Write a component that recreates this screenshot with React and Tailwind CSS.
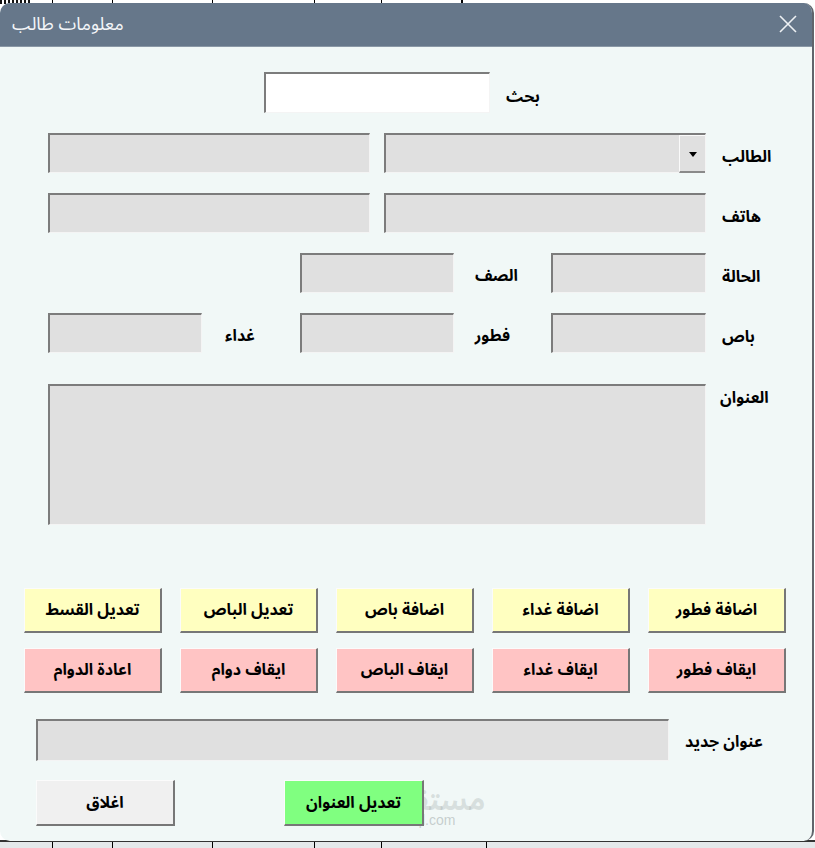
import React from "react";

const F = { fontFamily: '"Noto Sans Arabic", "DejaVu Sans", "Noto Sans", sans-serif' };

function Box({ w, h = "h-[40px]", white = false, children }) {
  return (
    <div
      className={`${w} ${h} ${white ? "bg-white" : "bg-[#e0e0e0]"} border-t-2 border-l-2 border-[#7c7c7c] border-r border-b border-r-[#f4f4f4] border-b-[#f4f4f4] shrink-0 relative`}
    >
      {children}
    </div>
  );
}

function Label({ children, className = "" }) {
  return (
    <div dir="rtl" className={`text-[16px] font-bold text-black leading-none whitespace-nowrap ${className}`}>
      {children}
    </div>
  );
}

function Btn({ children, color, w = "w-[138px]", h = "h-[45px]" }) {
  return (
    <div
      dir="rtl"
      className={`${w} ${h} ${color} shrink-0 relative z-10 flex items-center justify-center border-t border-l border-[#fbfbfb] border-r-2 border-b-2 border-r-[#777] border-b-[#777] text-[16px] font-bold text-black`}
    >
      {children}
    </div>
  );
}

export default function App() {
  return (
    <div style={F} className="w-[815px] h-[848px] bg-white relative overflow-hidden">
      {/* spreadsheet strips behind */}
      <div className="absolute top-0 left-0 w-full h-[4px] flex bg-white">
        <div className="w-[30px] h-full bg-[repeating-linear-gradient(90deg,#111_0,#111_2px,#fff_2px,#fff_4px)]" />
        <div className="w-[23px] border-r border-black" />
        <div className="w-[60px] border-r border-black" />
        <div className="w-[100px] border-r border-black" />
        <div className="w-[102px] border-r border-black" />
        <div className="w-[67px] border-r border-black" />
        <div className="w-[81px] border-r-2 border-black" />
      </div>
      <div className="absolute bottom-0 left-0 w-full h-[8px] flex bg-[#e4e8ea] border-t-2 border-[#333]">
        <div className="w-[53px] border-r border-black" />
        <div className="w-[60px] border-r border-black" />
        <div className="w-[100px] border-r border-black" />
        <div className="w-[102px] border-r border-black" />
        <div className="w-[67px] border-r border-black" />
        <div className="w-[105px] border-r border-black" />
      </div>

      {/* dialog */}
      <div className="absolute left-0 top-[3px] w-[814px] h-[838px] rounded-[10px] overflow-hidden bg-[#f1f8f7] border-r-2 border-[#60656c] flex flex-col">
        {/* title bar */}
        <div className="h-[44px] shrink-0 bg-[#66778a] flex items-center justify-between pl-[12px] pr-[14px] border-b border-[#8a98a6]">
          <div dir="rtl" className="text-[18px] text-[#f3f5f8]">معلومات طالب</div>
          <svg width="20" height="20" viewBox="0 0 20 20" className="mt-[-2px]">
            <path d="M2 2 L18 18 M18 2 L2 18" stroke="#eef1f4" strokeWidth="1.6" />
          </svg>
        </div>

        {/* body */}
        <div className="flex flex-col pt-[25px]">
          {/* search */}
          <div className="flex items-center h-[41px] pl-[264px]">
            <Box w="w-[226px]" h="h-[41px]" white />
            <Label className="ml-[16px] mt-[8px]">بحث</Label>
          </div>

          {/* student */}
          <div className="flex items-start h-[40px] pl-[48px] mt-[20px]">
            <Box w="w-[322px]" />
            <div className="ml-[14px]">
              <Box w="w-[322px]">
                <div className="absolute right-0 top-0 w-[26px] h-[38px] border-l border-t border-[#fafafa] border-b-2 border-b-[#8a8a8a] flex items-start justify-center pt-[16px]">
                  <svg width="8" height="5" viewBox="0 0 8 5">
                    <path d="M0 0 H8 L4 5 Z" fill="#000" />
                  </svg>
                </div>
              </Box>
            </div>
            <Label className="ml-[16px] mt-[16px]">الطالب</Label>
          </div>

          {/* phone */}
          <div className="flex items-start h-[40px] pl-[48px] mt-[20px]">
            <Box w="w-[322px]" />
            <div className="ml-[14px]">
              <Box w="w-[322px]" />
            </div>
            <Label className="ml-[16px] mt-[16px]">هاتف</Label>
          </div>

          {/* status / class */}
          <div className="flex items-start h-[40px] pl-[300px] mt-[20px]">
            <Box w="w-[154px]" />
            <div className="w-[97px] flex justify-end pr-[33px] pt-[15px]">
              <Label>الصف</Label>
            </div>
            <Box w="w-[155px]" />
            <Label className="ml-[16px] mt-[16px]">الحالة</Label>
          </div>

          {/* bus / breakfast / lunch */}
          <div className="flex items-start h-[40px] pl-[48px] mt-[20px]">
            <Box w="w-[154px]" />
            <div className="w-[98px] flex justify-end pr-[45px] pt-[15px]">
              <Label>غداء</Label>
            </div>
            <Box w="w-[154px]" />
            <div className="w-[97px] flex justify-end pr-[41px] pt-[15px]">
              <Label>فطور</Label>
            </div>
            <Box w="w-[155px]" />
            <Label className="ml-[16px] mt-[16px]">باص</Label>
          </div>

          {/* address */}
          <div className="flex items-start pl-[48px] mt-[31px]">
            <Box w="w-[658px]" h="h-[141px]" />
            <Label className="ml-[14px] mt-[6px]">العنوان</Label>
          </div>

          {/* buttons */}
          <div className="flex gap-[18px] pl-[24px] mt-[63px]">
            <Btn color="bg-[#ffffc0]">تعديل القسط</Btn>
            <Btn color="bg-[#ffffc0]">تعديل الباص</Btn>
            <Btn color="bg-[#ffffc0]">اضافة باص</Btn>
            <Btn color="bg-[#ffffc0]">اضافة غداء</Btn>
            <Btn color="bg-[#ffffc0]">اضافة فطور</Btn>
          </div>
          <div className="flex gap-[18px] pl-[24px] mt-[15px]">
            <Btn color="bg-[#ffc4c4]">اعادة الدوام</Btn>
            <Btn color="bg-[#ffc4c4]">ايقاف دوام</Btn>
            <Btn color="bg-[#ffc4c4]">ايقاف الباص</Btn>
            <Btn color="bg-[#ffc4c4]">ايقاف غداء</Btn>
            <Btn color="bg-[#ffc4c4]">ايقاف فطور</Btn>
          </div>

          {/* new address */}
          <div className="flex items-center pl-[36px] mt-[26px]">
            <Box w="w-[633px]" h="h-[42px]" />
            <Label className="ml-[16px] mt-[4px]">عنوان جديد</Label>
          </div>

          {/* bottom buttons */}
          <div className="flex pl-[36px] mt-[19px] relative">
            <div className="absolute left-[392px] top-[8px] text-[28px] font-bold text-[#8c9696]/25 leading-none z-0">مستقل</div>
            <div className="absolute left-[376px] top-[33px] text-[14px] text-[#9aa4a4]/50 leading-none z-0" style={{ fontFamily: '"Liberation Sans", sans-serif' }}>mostaql.com</div>
            <Btn color="bg-[#f0f0f0]" w="w-[139px]" h="h-[46px]">اغلاق</Btn>
            <div className="ml-[109px] relative z-10">
              <Btn color="bg-[#80ff80]" w="w-[140px]" h="h-[46px]">تعديل العنوان</Btn>
            </div>
          </div>
        </div>
      </div>
    </div>
  );
}
